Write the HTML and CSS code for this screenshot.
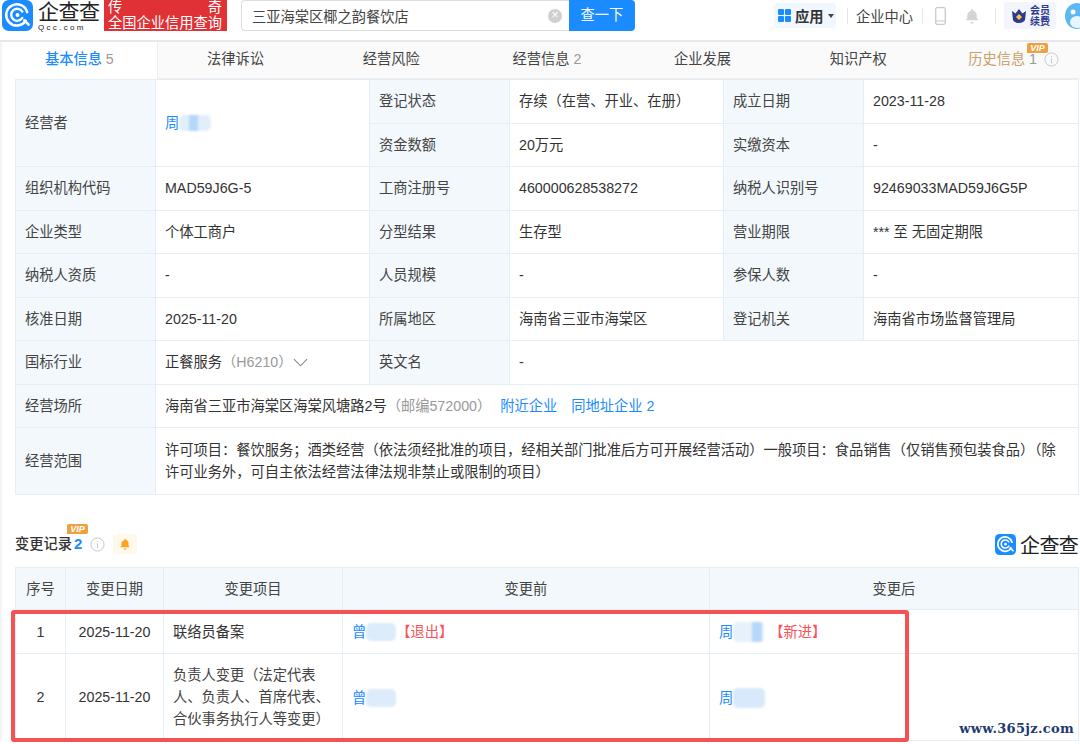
FILE: index.html
```html
<!DOCTYPE html>
<html lang="zh-CN">
<head>
    <meta charset="UTF-8">
    <meta name="viewport" content="width=device-width, initial-scale=1.0">
    <title>三亚海棠区椰之韵餐饮店</title>
    <link rel="stylesheet" href="styles.css">
</head>
<body>
    <svg class="icon-defs" width="0" height="0">
        <defs>
            <symbol id="qcc-logo" viewBox="0 0 32 32">
                <rect width="32" height="32" rx="7" fill="#1a8cff"/>
                <path d="M24.5 21.5A11 11 0 1 1 26 12.5" fill="none" stroke="#fff" stroke-width="2.6" stroke-linecap="round"/>
                <path d="M21 18.5A6.2 6.2 0 1 1 21 12" fill="none" stroke="#fff" stroke-width="2.4" stroke-linecap="round"/>
                <circle cx="16" cy="15.5" r="2" fill="#fff"/>
                <path d="M23 21l4.5 4.5" stroke="#fff" stroke-width="2.6" stroke-linecap="round"/>
            </symbol>
            <symbol id="info" viewBox="0 0 16 16">
                <circle cx="8" cy="8" r="7" fill="none" stroke="#c8c8c8"/>
                <path d="M8 7v5M8 4.2v1.2" stroke="#c8c8c8" stroke-width="1.1"/>
            </symbol>
            <symbol id="bell" viewBox="0 0 16 16">
                <path d="M8 1a1 1 0 0 1 1 1v.4c2.4.5 3.7 2.3 3.7 4.6v3l1.3 1.6v.6H2v-.6L3.300 10.600v-3c0-2.300 1.300-4.100 3.700-4.600V2a1 1 0 0 1 1-1zM6.300 14h3.400a1.700 1.700 0 0 1-3.400 0z"/>
            </symbol>
        </defs>
    </svg>

    <header class="topbar">
        <div class="brand">
            <svg class="brand-icon"><use href="#qcc-logo"/></svg>
            <div class="brand-text">
                <div class="brand-name">企查查</div>
                <div class="brand-url">Qcc.com</div>
            </div>
        </div>
        <div class="slogan">
            <div class="slogan-top"><span>传</span><span>奇</span></div>
            <div>全国企业信用查询</div>
        </div>
        <div class="search">
            <div class="search-input">
                <span>三亚海棠区椰之韵餐饮店</span>
                <span class="search-clear">×</span>
            </div>
            <div class="search-btn">查一下</div>
        </div>
        <nav class="topnav">
            <div class="app-chip">
                <svg class="app-grid" viewBox="0 0 13 13">
                    <rect width="6" height="6" rx="1" fill="#1a8cff"/>
                    <rect x="7" width="6" height="6" rx="1" fill="#1a8cff"/>
                    <rect y="7" width="6" height="6" rx="1" fill="#1a8cff"/>
                    <rect x="7" y="7" width="6" height="6" rx="1" fill="#1a8cff"/>
                </svg>
                <span>应用</span>
                <i class="caret"></i>
            </div>
            <i class="nav-sep"></i>
            <div class="nav-link">企业中心</div>
            <i class="nav-sep"></i>
            <svg class="phone" viewBox="0 0 11 18">
                <rect x="0.700" y="0.700" width="9.600" height="16.600" rx="1.500" fill="none" stroke="#c9c9c9" stroke-width="1.300"/>
                <path d="M1 14h9" stroke="#c9c9c9"/>
            </svg>
            <svg class="nav-bell"><use href="#bell"/></svg>
            <i class="nav-sep"></i>
            <div class="renew">
                <svg class="crown" viewBox="0 0 16 14">
                    <path d="M1 2l3.500 2.500L8 0l3.500 4.500L15 2l-1 9c-1 2-3.500 3-6 3s-5-1-6-3z" fill="#2b3a8c"/>
                    <path d="M5 8l3-3 3 3-3 3z" fill="#ffc53d"/>
                </svg>
                <div class="renew-text">会员<br>续费</div>
            </div>
            <div class="avatar">
                <svg viewBox="0 0 16 28" width="16" height="28">
                    <ellipse cx="13" cy="14" rx="12" ry="13" fill="#5cb8f2"/>
                    <circle cx="9" cy="10" r="2.500" fill="#fff"/>
                    <ellipse cx="13" cy="20" rx="7" ry="6" fill="#e8f6ff"/>
                </svg>
            </div>
        </nav>
    </header>

    <div class="tabs">
        <div class="tab tab-active">基本信息 <em>5</em></div>
        <div class="tab">法律诉讼</div>
        <div class="tab">经营风险</div>
        <div class="tab">经营信息 <em>2</em></div>
        <div class="tab">企业发展</div>
        <div class="tab">知识产权</div>
        <div class="tab tab-history">
            <span class="history-label">历史信息</span> <em>1</em>
            <span class="vip vip-tab">VIP</span>
            <svg class="info-icon"><use href="#info"/></svg>
        </div>
    </div>

    <main class="content">
        <table class="info-table">
            <colgroup>
                <col class="c-label"><col class="c-value"><col class="c-label"><col class="c-value"><col class="c-label"><col>
            </colgroup>
            <tr class="row-info">
                <th rowspan="2">经营者</th>
                <td rowspan="2" class="owner-cell"><a class="owner">周<span class="blur blur-owner"></span></a></td>
                <th>登记状态</th><td>存续（在营、开业、在册）</td>
                <th>成立日期</th><td>2023-11-28</td>
            </tr>
            <tr class="row-info">
                <th>资金数额</th><td>20万元</td>
                <th>实缴资本</th><td>-</td>
            </tr>
            <tr class="row-info">
                <th>组织机构代码</th><td>MAD59J6G-5</td>
                <th>工商注册号</th><td>460000628538272</td>
                <th>纳税人识别号</th><td>92469033MAD59J6G5P</td>
            </tr>
            <tr class="row-info">
                <th>企业类型</th><td>个体工商户</td>
                <th>分型结果</th><td>生存型</td>
                <th>营业期限</th><td>*** 至 无固定期限</td>
            </tr>
            <tr class="row-info">
                <th>纳税人资质</th><td>-</td>
                <th>人员规模</th><td>-</td>
                <th>参保人数</th><td>-</td>
            </tr>
            <tr class="row-info">
                <th>核准日期</th><td>2025-11-20</td>
                <th>所属地区</th><td>海南省三亚市海棠区</td>
                <th>登记机关</th><td>海南省市场监督管理局</td>
            </tr>
            <tr class="row-info">
                <th>国标行业</th>
                <td>
                    <div class="industry">正餐服务<span class="muted">（H6210）</span>
                        <svg class="chevron" viewBox="0 0 16 9"><path d="M1 1l7 7 7-7" fill="none" stroke="#888" stroke-width="1.200"/></svg>
                    </div>
                </td>
                <th>英文名</th><td colspan="3">-</td>
            </tr>
            <tr class="row-info">
                <th>经营场所</th>
                <td colspan="5">海南省三亚市海棠区海棠风塘路2号<span class="muted">（邮编572000）</span><a class="addr-link">附近企业</a><a class="addr-link">同地址企业 2</a></td>
            </tr>
            <tr>
                <th>经营范围</th>
                <td colspan="5" class="scope">许可项目：餐饮服务；酒类经营（依法须经批准的项目，经相关部门批准后方可开展经营活动）一般项目：食品销售（仅销售预包装食品）（除许可业务外，可自主依法经营法律法规非禁止或限制的项目）</td>
            </tr>
        </table>

        <div class="section-head">
            <div class="section-title">
                <span class="section-name">变更记录</span><b>2</b>
                <span class="vip vip-section">VIP</span>
                <svg class="info-icon"><use href="#info"/></svg>
                <span class="bell-chip"><svg><use href="#bell"/></svg></span>
            </div>
            <div class="section-logo">
                <svg><use href="#qcc-logo"/></svg>
                <span>企查查</span>
            </div>
        </div>

        <table class="change-table">
            <colgroup>
                <col class="c-no"><col class="c-date"><col class="c-item"><col class="c-before"><col>
            </colgroup>
            <tr class="change-head">
                <th>序号</th><th>变更日期</th><th>变更项目</th><th>变更前</th><th>变更后</th>
            </tr>
            <tr class="row-first">
                <td class="center">1</td>
                <td class="center">2025-11-20</td>
                <td>联络员备案</td>
                <td><a class="person">曾<span class="blur blur-person"></span></a><span class="tag">【退出】</span></td>
                <td><a class="person">周<span class="blur blur-person-wide"></span></a><span class="tag">【新进】</span></td>
            </tr>
            <tr class="row-second">
                <td class="center">2</td>
                <td class="center">2025-11-20</td>
                <td class="item-long">负责人变更（法定代表人、负责人、首席代表、合伙事务执行人等变更）</td>
                <td><a class="person">曾<span class="blur blur-person"></span></a></td>
                <td><a class="person">周<span class="blur blur-person-soft"></span></a></td>
            </tr>
        </table>
    </main>

    <div class="highlight"></div>
    <div class="watermark">www.365jz.com</div>
</body>
</html>
```

FILE: styles.css
```css
/* page */
body {
    font-family: "Liberation Sans", "Noto Sans CJK SC", sans-serif;
    font-size: 14.25px;
    color: #333;
    background-color: #fff;
    margin: 0;
    width: 1080px;
    height: 744px;
    overflow: hidden;
    position: relative;
}

a {
    color: #1a8cff;
}

.icon-defs {
    position: absolute;
}

/* top bar */
.topbar {
    display: flex;
    align-items: flex-start;
    height: 40px;
    border-bottom: 2px solid #e8e8e8;
}

.topbar > *, .topnav > * {
    flex-shrink: 0;
}

.brand {
    display: flex;
    width: 104px;
    padding-left: 2px;
    box-sizing: border-box;
}

.brand-icon {
    width: 31px;
    height: 31px;
    flex-shrink: 0;
}

.brand-text {
    margin-left: 5px;
    padding-top: 1px;
}

.brand-name {
    font-size: 21px;
    line-height: 22px;
    color: #222;
    letter-spacing: -0.500px;
}

.brand-url {
    font-size: 8px;
    line-height: 9px;
    letter-spacing: 2.300px;
    color: #222;
}

.slogan {
    width: 123px;
    height: 31px;
    background-color: #e03236;
    color: #fff;
    line-height: 15px;
    padding: 0 4px;
    box-sizing: border-box;
    white-space: nowrap;
}

.slogan-top {
    display: flex;
    justify-content: space-between;
    padding-right: 1px;
    margin-bottom: 1px;
}

.search {
    display: flex;
    margin-left: 14px;
    height: 31px;
}

.search-input {
    width: 328px;
    height: 31px;
    box-sizing: border-box;
    border: 1px solid #ddd;
    border-right: none;
    border-radius: 4px 0 0 4px;
    display: flex;
    align-items: center;
    justify-content: space-between;
    padding: 0 7px 0 10px;
    color: #444;
}

.search-clear {
    width: 14px;
    height: 14px;
    line-height: 13px;
    text-align: center;
    border-radius: 50%;
    background-color: #d0d0d0;
    color: #fff;
    font-size: 12px;
}

.search-btn {
    width: 66px;
    background-color: #1a8cff;
    color: #fff;
    line-height: 31px;
    text-align: center;
    border-radius: 0 4px 4px 0;
}

.topnav {
    display: flex;
    align-items: center;
    margin-left: 139px;
    height: 31px;
    white-space: nowrap;
}

.app-chip {
    display: flex;
    align-items: center;
    width: 62px;
    height: 25px;
    box-sizing: border-box;
    padding-left: 4px;
    background-color: #f1f7fe;
    border-radius: 4px;
    font-weight: bold;
    color: #333;
}

.app-grid {
    width: 13px;
    height: 13px;
    margin-right: 4px;
}

.caret {
    border: 3px solid transparent;
    border-top: 4px solid #444;
    border-bottom: none;
    margin-left: 4px;
}

.nav-sep {
    width: 1px;
    height: 16px;
    background-color: #e6e6e6;
}

.app-chip + .nav-sep {
    margin-left: 11px;
}

.nav-link {
    width: 58px;
    margin: 0 8px;
    color: #444;
}

.phone {
    width: 11px;
    height: 18px;
    margin-left: 12px;
}

.nav-bell {
    width: 16px;
    height: 18px;
    margin: 0 15px 0 18px;
    fill: #d4d4d4;
}

.renew {
    display: flex;
    align-items: center;
    width: 52px;
    height: 27px;
    margin-left: 8px;
    padding-left: 7px;
    box-sizing: border-box;
    background-color: #f3f4fc;
    border-radius: 3px;
}

.crown {
    width: 16px;
    height: 14px;
}

.renew-text {
    font-size: 10px;
    line-height: 11px;
    color: #2b3a8c;
    margin-left: 3px;
    font-weight: bold;
    white-space: nowrap;
}

.avatar {
    margin-left: 8px;
    height: 28px;
    overflow: hidden;
}

/* tabs */
.tabs {
    display: grid;
    grid-template-columns: repeat(7, 155.700px);
    border-left: 2px solid #f4f4f4;
    height: 36px;
    border-bottom: 1px solid #eee;
    background-color: #fafafa;
}

.tab {
    line-height: 35px;
    text-align: center;
    color: #444;
    white-space: nowrap;
}

.tab em {
    font-style: normal;
    color: #999;
}

.tab-active {
    background-color: #fff;
    color: #1a8cff;
    font-weight: 500;
    border-right: 1px solid #eee;
    margin-bottom: -1px;
}

.tab-history {
    position: relative;
    padding-left: 32px;
    text-align: left;
}

.history-label {
    color: #c9a06a;
}

.vip {
    display: inline-block;
    background-color: #f0a040;
    color: #fff;
    font-size: 9px;
    line-height: 10px;
    font-weight: bold;
    font-style: italic;
    width: 21px;
    text-align: center;
    border-radius: 2px 2px 2px 0;
    position: absolute;
}

.vip-tab {
    left: 91px;
    top: 1px;
}

.tab-history .info-icon {
    position: absolute;
    left: 108px;
    top: 10px;
}

.info-icon {
    width: 15px;
    height: 15px;
}

/* info table */
.content {
    border-left: 2px solid #f4f4f4;
    padding-left: 13px;
    width: 1064px;
}

table {
    border-collapse: collapse;
    table-layout: fixed;
    width: 100%;
}

th, td {
    border: 1px solid #e4eef6;
    padding: 0 9px;
    text-align: left;
    font-weight: normal;
    line-height: 22px;
}

th {
    background-color: #f2f8fc;
    color: #444;
}

.c-label {
    width: 140px;
}

.c-value {
    width: 214px;
}

.row-info {
    height: 43.500px;
}

.scope {
    padding: 11px 9px;
}

.owner {
    display: inline-flex;
    align-items: center;
}

.blur {
    display: inline-block;
    height: 16px;
    background: linear-gradient(90deg, #e2effb 0 30%, #b5d7f8 30% 60%, #e2effb 60%);
    border-radius: 5px;
    filter: blur(1px);
}

.blur-owner {
    width: 32px;
}

.blur-person {
    width: 30px;
    height: 18px;
    background: #dcecfb;
}

.blur-person-wide {
    width: 32px;
    height: 20px;
    margin-right: 4px;
    background: linear-gradient(90deg, #e6f1fb 0 60%, #b5d7f8 60% 90%, #f0f6fc 90%);
}

.blur-person-soft {
    width: 32px;
    height: 20px;
    background: #d8e9fb;
}

.industry {
    display: flex;
    align-items: center;
    white-space: nowrap;
}

.muted {
    color: #999;
}

.chevron {
    width: 15px;
    height: 9px;
}

.addr-link {
    margin-right: 14px;
    margin-left: 9px;
}

.addr-link + .addr-link {
    margin-left: 0;
}

/* change records */
.section-head {
    display: flex;
    justify-content: space-between;
    align-items: center;
    height: 72px;
    padding-top: 26px;
    box-sizing: border-box;
}

.section-title {
    display: flex;
    align-items: center;
    position: relative;
    font-family: "Noto Sans CJK SC", sans-serif;
    font-weight: 500;
    color: #333;
}

.section-name {
    margin-top: -3px;
}

.section-title b {
    font-family: "Liberation Sans", sans-serif;
    font-size: 15px;
    line-height: 15px;
    color: #1a8cff;
    margin-left: 2px;
    margin-top: -2px;
}

.section-title .info-icon {
    margin-left: 8px;
}

.vip-section {
    left: 52px;
    top: -10px;
    font-family: "Liberation Sans", sans-serif;
}

.bell-chip {
    display: flex;
    align-items: center;
    justify-content: center;
    width: 24px;
    height: 20px;
    margin-left: 8px;
    background-color: #fff8ec;
    border-radius: 2px;
}

.bell-chip svg {
    width: 12px;
    height: 14px;
    fill: #ffa41c;
}

.section-logo {
    display: flex;
    align-items: center;
    font-size: 20px;
    color: #222;
    margin-right: 1px;
}

.section-logo svg {
    width: 21px;
    height: 21px;
    margin-right: 4px;
}

.section-logo span {
    letter-spacing: -0.700px;
}

.c-no {
    width: 50px;
}

.c-date {
    width: 98px;
}

.c-item {
    width: 179px;
}

.c-before {
    width: 367px;
}

.change-head {
    height: 42px;
}

.change-head th {
    text-align: center;
}

.row-first {
    height: 44px;
}

.row-second {
    height: 87px;
}

.center {
    text-align: center;
}

.item-long {
    color: #444;
}

.person {
    display: inline-flex;
    align-items: center;
    vertical-align: middle;
}

.tag {
    color: #f5555a;
    vertical-align: middle;
}

/* annotation drawn over the screenshot */
.highlight {
    position: absolute;
    left: 11px;
    top: 610px;
    width: 890px;
    height: 124px;
    border: 4px solid #f55256;
    border-radius: 3px;
}

.watermark {
    position: absolute;
    right: 6px;
    top: 721px;
    font-family: "DejaVu Serif", serif;
    font-size: 13px;
    font-weight: bold;
    color: #1c3a72;
    background-color: #fff;
    letter-spacing: 0.300px;
}
```
